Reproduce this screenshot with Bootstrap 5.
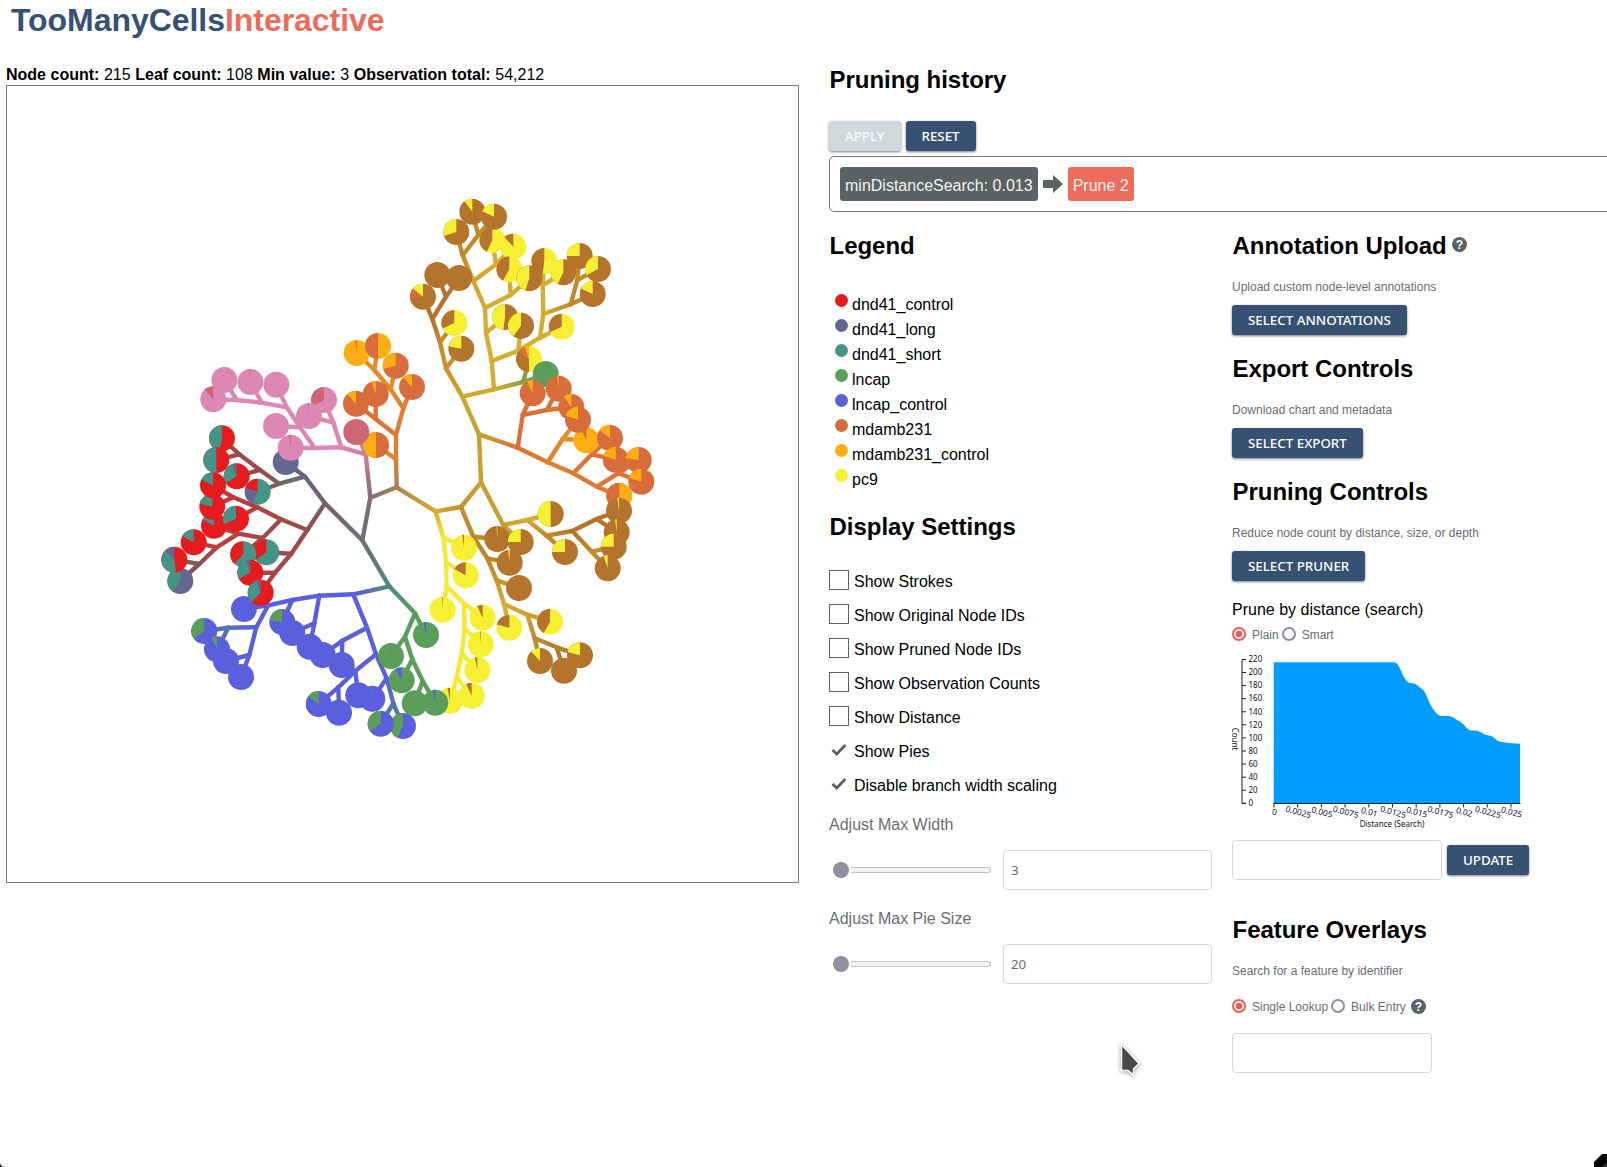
<!DOCTYPE html>
<html lang="en">
<head>
<meta charset="utf-8">
<meta name="viewport" content="width=device-width, initial-scale=1">
<title>TooManyCellsInteractive</title>
<link rel="stylesheet" href="https://cdn.jsdelivr.net/npm/bootstrap@5.3.0/dist/css/bootstrap.min.css">
<style>
body{font-family:"Liberation Sans",Arial,sans-serif;font-size:16px;color:#000;background:#fff;height:1167px;overflow:hidden}
.brand{font-size:32px;line-height:40px;padding-left:11px;color:#365172;letter-spacing:-.05px}
.brand span{color:#ed6c5b}
.stats{line-height:24px;height:22px;margin-top:23px;word-spacing:.1px}
.tree-col{width:793px;margin-left:6px;flex:none}
.tree-box{display:block;width:793px;height:798px;border:1px solid #777}
.side{width:790px;margin-left:30px;padding-top:25px;flex:none}
h2{font-size:24px;line-height:30px;font-weight:700;margin:0;letter-spacing:-.03px;text-indent:.5px}
.btn-row{gap:5px;margin-top:26px}
.btn-tmc{font-family:"Noto Sans",sans-serif;font-weight:500;font-size:13.33px;line-height:30px;height:30px;padding:0 16px;border:0;border-radius:3px;background:#365172;color:#fff;box-shadow:0 1px 3px rgba(0,0,0,.35),0 1px 2px rgba(0,0,0,.2)}
.btn-tmc:disabled{background:#d2d9dd;color:#f6f9fa;opacity:1}
.history{height:56px;border:1px solid #777;border-radius:5px;margin-top:5px;padding:10px;gap:5px}
.step{height:34px;line-height:37px;padding:0 5px;border-radius:3px;background:#5c6163;color:#f2f2f2}
.step.current{background:#ed6c5b}
.col-a{width:383px;margin-right:20px;flex:none}
.legend-list{margin:31px 0 20px;padding:0 0 0 6px;list-style:none}
.legend-list li{height:25px;line-height:25px;gap:4px}
.dot{width:13px;height:13px;border-radius:50%;margin-bottom:9px}
.options{margin:21px 0 12px}
.opt{height:34px;line-height:34px;gap:5px}
.opt span{padding-top:4px}
.boxed{width:20px;height:20px;border:1px solid #5c6163;flex:none}
.tick{width:20px;height:20px;flex:none}
.muted-label{color:#6b6e70;line-height:24px}
.adjust{margin:13px 0 17px}
.adjust .field{width:209px}
.field{font-family:"Noto Sans",sans-serif;font-size:13.33px;color:#6b6e70;border:1px solid #d2d9dd;border-radius:4px;height:40px;padding:0 7px}
.slider{width:158px;height:16px;margin-left:4px}
.knob{width:16px;height:16px;border-radius:50%;background:#918fa0;margin-right:2px}
.track{height:6px;background:#f3f3f4;border:1px solid #c2c2c8;border-left:0;border-radius:0 3px 3px 0}
.desc{font-size:12px;line-height:18px;color:#6b6e70;margin:17px 0 9px}
.sect{margin-bottom:19px}
.radios{font-size:12px;height:24px;color:#6b6e70}
.radios span{margin:2px 3px 0 6px}
.rad{width:14px;height:14px;flex:none}
.help{width:15px;height:15px;flex:none}
.chart{display:block;width:300px;height:184px}
.chart text{font-family:"Noto Sans",sans-serif;font-size:8px;fill:#111}
.pointer{position:absolute;left:1112px;top:1038px}
.corner-r{position:absolute;right:0;bottom:0}
.corner-l{position:absolute;left:0;bottom:0}
</style>
<script src="https://cdn.jsdelivr.net/npm/bootstrap@5.3.0/dist/js/bootstrap.bundle.min.js"></script>
</head>
<body class="position-relative">
<header class="brand fw-bold">TooManyCells<span>Interactive</span></header>
<main class="d-flex">
  <section class="tree-col">
    <div class="stats"><b>Node count:</b> 215 <b>Leaf count:</b> 108 <b>Min value:</b> 3 <b>Observation total:</b> 54,212</div>
    <svg class="tree-box" id="tree" viewBox="7 86 791 796"><defs></defs><g id="edges" stroke-width="4.4" stroke-linecap="round"></g><g id="pies"></g></svg>
  </section>
  <section class="side">
    <h2>Pruning history</h2>
    <div class="btn-row d-flex">
      <button class="btn btn-tmc" disabled>APPLY</button>
      <button class="btn btn-tmc">RESET</button>
    </div>
    <div class="history d-flex align-items-center">
      <span class="step">minDistanceSearch: 0.013</span>
      <svg width="20" height="18" viewBox="0 0 20 18"><path d="M0 5h10V0l10 9-10 9v-5H0z" fill="#5c6163"/></svg>
      <span class="step current">Prune 2</span>
    </div>
    <div class="d-flex" style="margin-top:19px">
      <div class="col-a">
        <h2>Legend</h2>
        <ul class="legend-list" id="legend"></ul>
        <h2>Display Settings</h2>
        <div class="options" id="options"></div>
        <div class="muted-label">Adjust Max Width</div>
        <div class="adjust d-flex align-items-center">
          <div class="slider d-flex align-items-center"><i class="knob"></i><i class="track flex-grow-1"></i></div>
          <input class="field ms-auto" value="3">
        </div>
        <div class="muted-label">Adjust Max Pie Size</div>
        <div class="adjust d-flex align-items-center">
          <div class="slider d-flex align-items-center"><i class="knob"></i><i class="track flex-grow-1"></i></div>
          <input class="field ms-auto" value="20">
        </div>
      </div>
      <div>
        <div class="sect">
          <div class="d-flex align-items-center" style="gap:5px"><h2>Annotation Upload</h2>
            <svg class="help" style="margin-bottom:3px" viewBox="0 0 15 15"><circle cx="7.5" cy="7.5" r="7.5" fill="#5c6163"/><text x="7.5" y="11.6" font-size="12" font-weight="700" text-anchor="middle" fill="#fff">?</text></svg></div>
          <p class="desc">Upload custom node-level annotations</p>
          <button class="btn btn-tmc d-block">SELECT ANNOTATIONS</button>
        </div>
        <div class="sect">
          <h2>Export Controls</h2>
          <p class="desc">Download chart and metadata</p>
          <button class="btn btn-tmc d-block">SELECT EXPORT</button>
        </div>
        <div>
          <h2>Pruning Controls</h2>
          <p class="desc">Reduce node count by distance, size, or depth</p>
          <button class="btn btn-tmc d-block">SELECT PRUNER</button>
        </div>
        <div style="line-height:24px;margin-top:17px">Prune by distance (search)</div>
        <div class="radios d-flex align-items-center">
          <svg class="rad" viewBox="0 0 14 14"><circle cx="7" cy="7" r="6" fill="#fff" stroke="#ee5a55" stroke-width="2"/><circle cx="7" cy="7" r="3.3" fill="#ee5a55"/></svg>
          <span>Plain</span>
          <svg class="rad" viewBox="0 0 14 14"><circle cx="7" cy="7" r="6" fill="#fff" stroke="#918fa0" stroke-width="2"/></svg>
          <span>Smart</span>
        </div>
        <svg class="chart" id="chart" viewBox="1232 646 300 184">
          <path fill="#009dff" d="M1273.7 803V662.3H1394C1398 662.3 1400 669 1403.3 676C1405 679 1406.5 681.5 1409 682.7C1411 683.3 1413 683 1415 683.8C1417 684.7 1417.5 685.6 1419 686.7C1421 688.2 1422.5 688.8 1424 691C1426 694 1427 697.5 1428.3 700C1430 704 1431.5 707 1433.3 709.3C1435.5 712 1437 714.5 1439.5 715.5C1443 716.5 1447 715.7 1450 716.3C1453 716.9 1454.5 718.5 1456.7 719.8C1459 721 1460.7 722 1462.7 723.8C1465 726 1466.5 729 1469.3 730C1472 730.8 1475 730.2 1477.3 730.8C1480.5 731.7 1483 734 1486 735.1C1488 735.7 1490 735.5 1491.7 736.3C1494.5 737.5 1496.5 740.5 1499.3 741.5C1503 742.4 1508 742.8 1511.7 743.3L1520 743.7V803Z"/>
        </svg>
        <div class="d-flex align-items-center" style="gap:5px;margin-top:10px">
          <input class="field" style="width:210px"><button class="btn btn-tmc">UPDATE</button>
        </div>
        <h2 style="margin-top:35px">Feature Overlays</h2>
        <p class="desc" style="margin:17px 0 14px">Search for a feature by identifier</p>
        <div class="radios d-flex align-items-center">
          <svg class="rad" viewBox="0 0 14 14"><circle cx="7" cy="7" r="6" fill="#fff" stroke="#ee5a55" stroke-width="2"/><circle cx="7" cy="7" r="3.3" fill="#ee5a55"/></svg>
          <span>Single Lookup</span>
          <svg class="rad" viewBox="0 0 14 14"><circle cx="7" cy="7" r="6" fill="#fff" stroke="#918fa0" stroke-width="2"/></svg>
          <span style="margin-right:5px">Bulk Entry</span>
          <svg class="help" viewBox="0 0 15 15"><circle cx="7.5" cy="7.5" r="7.5" fill="#5c6163"/><text x="7.5" y="11.6" font-size="12" font-weight="700" text-anchor="middle" fill="#fff">?</text></svg>
        </div>
        <input class="field d-block" style="width:200px;margin-top:15px">
      </div>
    </div>
  </section>
</main>
<svg class="pointer" width="36" height="44" viewBox="0 0 36 44"><path d="M9.5 6.5V32.5H16L21.5 37V31L27 25.5Z" fill="#4a4a4a" stroke="#fff" stroke-width="1.5" style="filter:drop-shadow(0 1px 2px rgba(0,0,0,.4))"/></svg>
<svg class="corner-r" width="13" height="13" viewBox="0 0 13 13"><path d="M0 13V8L5 3L8 0H13V13Z"/><path d="M8 13Q10 10 13 9V13Z" fill="#333"/></svg>
<svg class="corner-l" width="5" height="4" viewBox="0 0 5 4"><path d="M0 0Q1 4 5 4H0Z" fill="#222"/></svg>
<script>
const C={R:'#e61b1e',L:'#666691',T:'#449488',G:'#5b9e5a',B:'#5a5fdd',O:'#d96c3b',A:'#ffad12',Y:'#f7ef32',N:'#b5742b',P:'#dd87b4',Q:'#cf6676',
 grey:'#6d7074',mr:'#9b4b4b',rd:'#b94040',dk:'#84565c',tl:'#508a80',ye:'#f5e934',mu:'#d6ad2c',mb:'#c9a02f',go:'#c08a2b',or:'#dc7135',oa:'#e28a2c'};
const NS='http://www.w3.org/2000/svg';
function el(tag,attrs,parent){const e=document.createElementNS(NS,tag);for(const k in attrs)e.setAttribute(k,attrs[k]);parent.appendChild(e);return e;}

/* One node a line: x y, then a branch colour or a pie (label + percent), then an optional stacking level.
   The indent gives the depth. */
const source=`
362.3 540.3 grey
 389.3 586.3 tl
  353.3 594.3 B
   319.3 595.7 B
    292.3 600 B
     268.3 605.3 B
      244 609 B100 -1
      256.3 627.3 B
       228.3 627.7 #5572b8
        204.3 631 B65G35
        217 649.3 B93G7
       249.3 655 B
        226 661 B100
        241 677 B100
     282.3 622 B77G23 1
    314.3 623.3 B
     292.3 633 B100
     309.7 646.7 B100
   367 627.7 B
    342.3 640.7 B
     322.7 655 B100
     341.7 665 B100
    376 654.3 B
     355.3 671 B
      338.3 687.3 B
       318.7 704 B85G15
       339 712.7 B100
      358.3 695.3 B100
     386.7 678.3 B
      372.3 698.7 B99G1
      393.3 703.3 #4f78a5
       403 726 B57G43
       380.7 723.7 B65G35
  415 613.3 G
   426 635 G97B3
   405 636.7 G
    391 656 G99L1
    412.3 659.3 G
     401.7 680.3 G92B8
     422.7 681 G
      414.7 703.3 G100 1
      435.3 702.7 G97B3 1
 325 503.3 #76606a
  305 476.7 #66667f
   285.7 462 L100
   279.3 483.7 #706763
    257.7 491.7 T56L24R20 1
    260 470 mr
     236.7 476.3 R66T29L5
     239.3 454.3 mr
      222 438.3 R53T47
      216.3 460 R50T50
  307.3 530 mr
   281 519.3 #a34949
    262.7 538 mr
     238.3 533.7 rd
      214 525.7 R83T17
      216.7 547.3 rd
       193.7 542.3 R83T17
       199.3 564 dk
        180.3 581 L60T40
        174.3 559.7 R48T40L12
     243.3 554.3 T62R38
    257.3 507.3 #b04242
     236 518.7 R68T32
     233.3 497.3 #c63636
      212.3 506.7 R79T21
      213 485.3 R82T18
   291.3 553.7 mr
    266.3 552.3 T65R35 -1
    275 572.7 #a84444
     250.3 572.7 R67T28L5
     260.7 592.7 R62T33L5
 370.3 497.7 #7d6f7c
  365.7 454.3 #d27c9b
   356.3 432 Q100 1
   341.3 447.3 P
    314.7 448 P
     290.7 447.7 P98Q2 1
     300 427.3 P
      276 426 P100
      286.7 407.3 P
       276.3 384.7 P100
       261.7 402.7 P
        250.3 382 P99Q1
        236.7 400 P
         213.3 399.3 P88Q12
         224.3 380 P100
    333.3 422.7 P
     324 400 P67Q33
     309 416 P99Q1
  396.7 487.3 #a9854f
   396 459.3 #dc8233
    376 445 O50A50
    396 435 #e07a31
     375.7 419 or
      356 403.7 O88A12
      375.7 394 O95A5
     403.3 408.3 #e08030
      412 387 O88A12
      390.7 389.3 oa
       395.7 365.7 O71A29
       374.3 370 oa
        356.7 353 A98O2
        378 346 A50O50
   435.5 511.3 mu
    443.3 537.3 ye
     464 547.7 Y98N2
     446 562 ye
      465.7 575.3 Y83N17
      446.7 586.7 ye
       442.7 609.7 Y99N1
       464 603.3 ye
        482.7 617.7 Y93N7
        464.7 628.7 ye
         480.7 644.3 Y99N1
         461.7 653.3 ye
          477.3 670 Y97N3
          456.7 677.3 ye
           450 700.7 Y97N3
           471.7 695.7 Y93N7
    461 507 #c09030
     481 482.3 mb
      479 434.3 mb
       517.7 447.7 or
        522.7 415 or
         532.7 393.3 O93A7 1
         546.7 410 or
          558.7 388.7 O98A2 1
          571.3 407 O90A10 1
        547.7 462.3 #e0802f
         562.7 439 #e58a2c
          586.3 440.3 A93O7
          578 419.7 O80A20 2
         573.3 473.3 #de7831
          591.7 454.3 or
           610 438 O85A15
           615.7 459.7 O80A20
          596.7 486.7 #e07a31
           619.3 495.7 A50O50
           618.3 473.3 or
            638.7 460 O77A23
            641.3 481.7 O80A20
       462.3 396.7 #cfa52d
        446 368.3 #c8962b
         461.3 348.7 N78Y22
         440 342.3 go
          454.3 323 Y68N32
          432.3 319 N
           423 296.7 N72O14Y14
           446 296.7 N
            437.3 275 N100
            459 278 N100
        494 389.3 mu
         523.3 382 #8ba040
          529 359 Y50N36O9A5
          545.7 374 G100
         491.7 361 mu
          518.3 350.7 mu
           521 325.7 N60Y40 1
           540 337.7 mu
            561.7 326.7 Y68N32
            543.3 314 mu
             542.7 285.3 mu
              544.3 261 Y52N48 1
              563.3 272.3 N57Y43
             570.7 304.3 go
              592.7 294 N82Y18
              577.3 280 #c28a2b
               579.7 256 N75Y25
               598 269 N67Y33
          486 333 mu
           505 317 N52Y48
           485 308 mu
            510.7 295 mu
             509.3 269.3 Y58N42 1
             529.3 278.3 N55Y45 1
            473.3 281 #cfa32d
             496 264.3 mu
              492.3 240 Y57N43
              513.3 246.7 Y88N12
             462.7 255.3 go
              456.3 232 N70Y30
              478.3 235 go
               472.3 211.7 N90Y10
               494 216.7 N82Y18 1
      503.3 525 mb
       527.3 520 mu
        550.7 514 N50Y50
        546.7 535.7 go
         565 552 N75Y25
         572.3 531 N
          596.7 519 N
           619 510.7 N98Y2
           616.7 532.3 N98Y2
          591.7 551.7 go
           613.7 546.7 N75Y25
           607.7 568.3 N95Y5
       520.7 542 N75Y25 1
     473.3 536.7 #bd862b
      497.3 539 N99Y1
      487.3 558.3 #bd862b
       509.7 562.7 N98Y2
       496.7 580.3 #c6962c
        519 588 N100
        504 604 mu
         509.3 627.7 Y79N21
         527.3 614.7 #cda02c
          550 621.7 Y58N42
          534.7 638.3 go
           540 661 N88Y12
           556.7 647.3 #b97c2b
            564 670.7 N100
            580 655.3 N79Y21`;

const defs=document.querySelector('#tree defs'),edges=document.getElementById('edges'),pieG=document.getElementById('pies');
const pies=[],stack=[];let gid=0;
for(const line of source.split('\n').filter(Boolean)){
  const depth=line.search(/\S/),[x,y,s,z]=line.trim().split(' ');
  const leaf=/^[A-Z]\d/.test(s),node={x:+x,y:+y,c:C[s]||s};
  if(depth>0){
    const up=stack[depth-1];let stroke=up.c;
    if(!leaf&&node.c!==up.c){
      const id='g'+(gid++),g=el('linearGradient',{id,gradientUnits:'userSpaceOnUse',x1:up.x,y1:up.y,x2:x,y2:y},defs);
      el('stop',{offset:0,'stop-color':up.c},g);el('stop',{offset:1,'stop-color':node.c},g);
      stroke='url(#'+id+')';
    }
    el('line',{x1:up.x,y1:up.y,x2:x,y2:y,stroke},edges);
  }
  if(leaf)pies.push({x:+x,y:+y,s,z:+(z||0)});else stack[depth]=node;
}
pies.sort((a,b)=>a.z-b.z);
for(const q of pies){
  const parts=[...q.s.matchAll(/([A-Z])(\d+)/g)];
  el('circle',{cx:q.x,cy:q.y,r:13,fill:C[parts[0][1]]},pieG);
  let a=parts[0][2]/100*2*Math.PI;
  for(const m of parts.slice(1)){
    const b=a+m[2]/100*2*Math.PI,pt=t=>(q.x+13*Math.sin(t)).toFixed(2)+' '+(q.y-13*Math.cos(t)).toFixed(2);
    el('path',{d:`M${q.x} ${q.y}L${pt(a)}A13 13 0 ${b-a>Math.PI?1:0} 1 ${pt(b)}Z`,fill:C[m[1]]},pieG);
    a=b;
  }
}

/* legend and display options */
document.getElementById('legend').innerHTML=[['dnd41_control','R'],['dnd41_long','L'],['dnd41_short','T'],['lncap','G'],['lncap_control','B'],['mdamb231','O'],['mdamb231_control','A'],['pc9','Y']]
 .map(([t,c])=>`<li class="d-flex align-items-center"><i class="dot" style="background:${C[c]}"></i>${t}</li>`).join('');
document.getElementById('options').innerHTML=['Show Strokes','Show Original Node IDs','Show Pruned Node IDs','Show Observation Counts','Show Distance','Show Pies','Disable branch width scaling']
 .map((t,i)=>`<div class="opt d-flex align-items-center">${i<5?'<i class="boxed"></i>':'<svg class="tick" viewBox="0 0 20 20"><path d="M3.5 10L7.8 14L16.3 5" fill="none" stroke="#5c6163" stroke-width="2.8"/></svg>'}<span>${t}</span></div>`).join('');

/* distance chart axes */
const ch=document.getElementById('chart');
el('path',{d:'M1246 659.5H1242V803.5H1246',fill:'none',stroke:'#222'},ch);
for(let i=0;i<=11;i++){const y=803.3-i*13.08;
  el('path',{d:`M1242 ${y}h4`,stroke:'#222'},ch);
  el('text',{x:1248.5,y:y+2.8},ch).textContent=i*20;}
el('path',{d:'M1273.5 803.5H1520.5',stroke:'#123'},ch);
['0','0.0025','0.005','0.0075','0.01','0.0125','0.015','0.0175','0.02','0.0225','0.025'].forEach((t,i)=>{const x=1274+i*23.7;
  el('path',{d:`M${x} 803v4.5`,stroke:'#222'},ch);
  el('text',{transform:`translate(${x+.5} 812.5) rotate(15)`,y:2.5,'text-anchor':'middle',style:'font-size:8.4px'},ch).textContent=t;});
el('text',{x:1392,y:826.5,'text-anchor':'middle'},ch).textContent='Distance (Search)';
el('text',{transform:'translate(1232 739) rotate(90)','text-anchor':'middle'},ch).textContent='Count';
</script>
</body>
</html>
